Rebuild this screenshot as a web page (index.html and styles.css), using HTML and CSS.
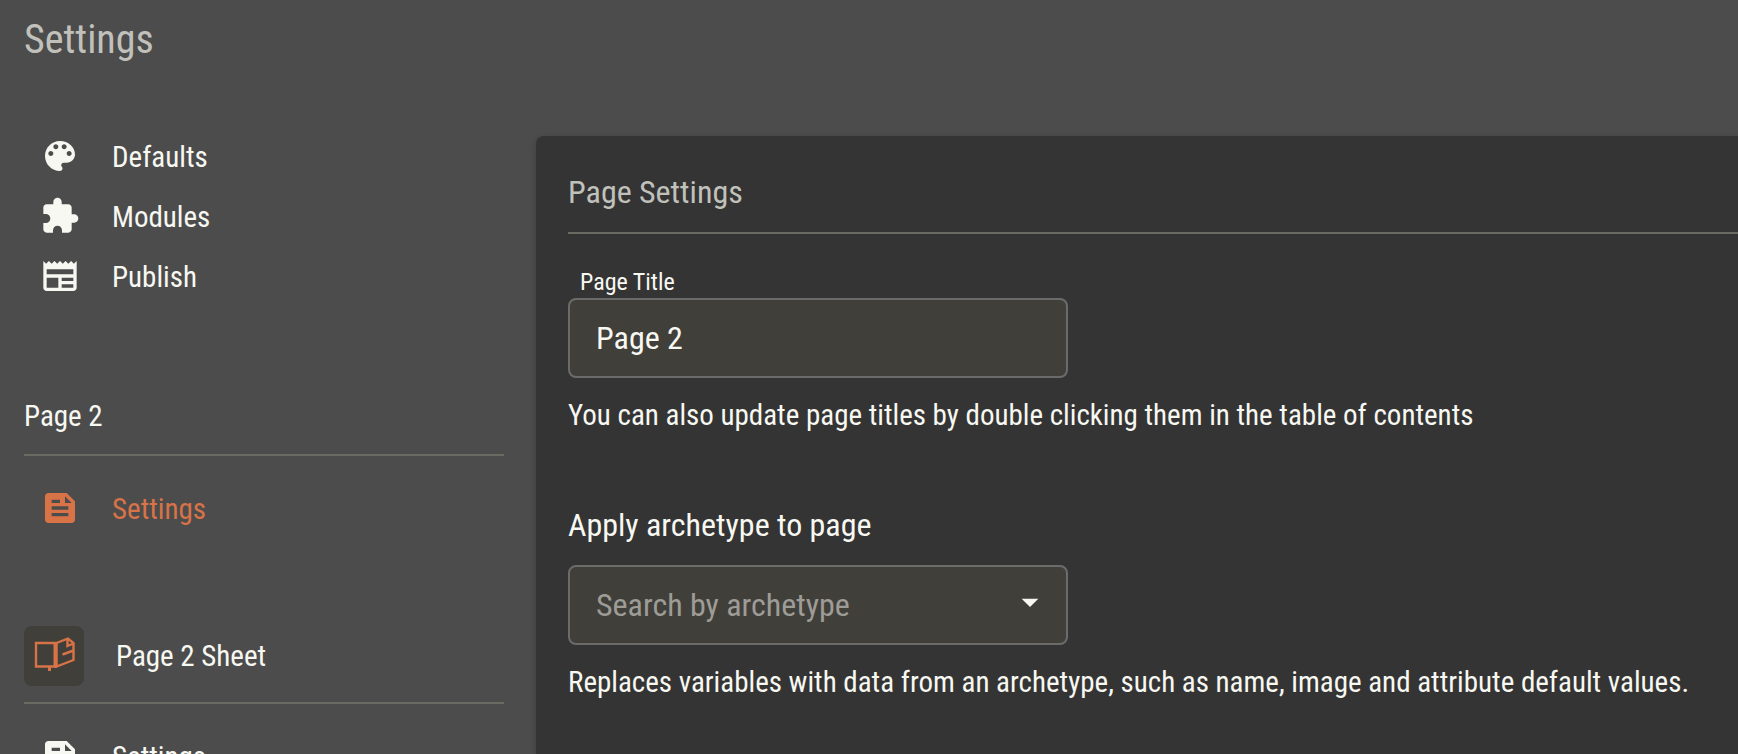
FILE: index.html
```html
<!DOCTYPE html>
<html lang="en">
<head>
<meta charset="utf-8">
<meta name="viewport" content="width=device-width, initial-scale=1">
<title>Settings</title>
<link rel="stylesheet" href="styles.css">
</head>
<body>
<svg class="sprite" aria-hidden="true">
  <symbol id="icon-article" viewBox="0 0 24 24">
    <path d="M16 3H5c-1.100 0-2 .9-2 2v14c0 1.100.9 2 2 2h14c1.100 0 2-.9 2-2V8l-5-5zM7 7h5v2H7V7zm10 10H7v-2h10v2zm0-4H7v-2h10v2zm-2-4V5l4 4h-4z"/>
  </symbol>
</svg>
<div class="app">
  <header class="app-header">
    <h1 class="app-title">Settings</h1>
  </header>
  <div class="layout">
    <nav class="sidebar" aria-label="Settings sections">
      <ul class="nav-list">
        <li><a class="nav-item" href="#defaults">
          <svg class="icon" viewBox="0 0 24 24" aria-hidden="true"><path d="M12 3c-4.970 0-9 4.030-9 9s4.030 9 9 9c.83 0 1.500-.67 1.500-1.500 0-.39-.15-.74-.39-1.010-.23-.26-.38-.61-.38-.99 0-.83.67-1.500 1.500-1.500H16c2.760 0 5-2.240 5-5 0-4.420-4.030-8-9-8zm-5.500 9c-.83 0-1.500-.67-1.500-1.500S5.670 9 6.500 9 8 9.670 8 10.500 7.330 12 6.500 12zm3-4C8.670 8 8 7.330 8 6.500S8.670 5 9.500 5s1.500.67 1.500 1.500S10.330 8 9.500 8zm5 0c-.83 0-1.500-.67-1.500-1.500S13.670 5 14.500 5s1.500.67 1.500 1.500S15.330 8 14.500 8zm3 4c-.83 0-1.500-.67-1.500-1.500S16.670 9 17.500 9s1.500.67 1.500 1.500-.67 1.500-1.500 1.500z"/></svg>
          <span class="nav-label">Defaults</span></a></li>
        <li><a class="nav-item" href="#modules">
          <svg class="icon" viewBox="0 0 24 24" aria-hidden="true"><path d="M20.500 11H19V7c0-1.100-.9-2-2-2h-4V3.500C13 2.120 11.880 1 10.500 1S8 2.120 8 3.500V5H4c-1.100 0-1.990.9-1.990 2v3.800H3.500c1.490 0 2.700 1.210 2.700 2.700s-1.210 2.700-2.700 2.700H2V20c0 1.100.9 2 2 2h3.800v-1.500c0-1.490 1.210-2.700 2.700-2.700s2.700 1.210 2.700 2.700V22H17c1.100 0 2-.9 2-2v-4h1.500c1.380 0 2.500-1.120 2.500-2.500S21.880 11 20.500 11z"/></svg>
          <span class="nav-label">Modules</span></a></li>
        <li><a class="nav-item" href="#publish">
          <svg class="icon" viewBox="0 0 24 24" aria-hidden="true"><path d="M22 3l-1.670 1.670L18.670 3 17 4.670 15.330 3l-1.660 1.670L12 3l-1.670 1.670L8.670 3 7 4.670 5.330 3 3.670 4.670 2 3v16c0 1.100.9 2 2 2h16c1.100 0 2-.9 2-2V3zM11 19H4v-6h7v6zm9 0h-7v-2h7v2zm0-4h-7v-2h7v2zm0-4H4V8h16v3z"/></svg>
          <span class="nav-label">Publish</span></a></li>
      </ul>
      <section class="nav-section">
        <h2 class="section-heading">Page 2</h2>
        <ul class="nav-list">
          <li><a class="nav-item nav-item-active" href="#page-settings" aria-current="page">
            <svg class="icon" aria-hidden="true"><use href="#icon-article"/></svg>
            <span class="nav-label">Settings</span></a></li>
        </ul>
      </section>
      <section class="nav-section">
        <h2 class="section-heading">
          <span class="tile"><svg class="tile-icon" viewBox="0 0 60 60" aria-hidden="true"><path d="M12 17h18.700v23.500H12zM32.500 17v23.500l17-6.500V17l-5.500-4.500zM43.500 12v8l6-2.500M49.500 24.500l-11 4"/><path class="tile-icon-bold" d="M31.700 16v25.500M25.500 41v4"/></svg></span>
          Page 2 Sheet</h2>
        <ul class="nav-list">
          <li><a class="nav-item" href="#sheet-settings">
            <svg class="icon" aria-hidden="true"><use href="#icon-article"/></svg>
            <span class="nav-label">Settings</span></a></li>
        </ul>
      </section>
    </nav>
    <main class="panel" id="page-settings">
      <h2 class="panel-title">Page Settings</h2>
      <form class="panel-form">
        <div class="field">
          <label class="field-label" for="page-title">Page Title</label>
          <input class="control" id="page-title" type="text" value="Page 2" aria-describedby="page-title-help">
          <p class="help" id="page-title-help">You can also update page titles by double clicking them in the table of contents</p>
        </div>
        <div class="field">
          <label class="field-heading" for="archetype">Apply archetype to page</label>
          <div class="select-wrap">
            <select class="control control-select" id="archetype" aria-describedby="archetype-help">
              <option value="">Search by archetype</option>
            </select>
            <svg class="icon select-arrow" viewBox="0 0 24 24" aria-hidden="true"><path d="M7 10l5 5 5-5z"/></svg>
          </div>
          <p class="help" id="archetype-help">Replaces variables with data from an archetype, such as name, image and attribute default values.</p>
        </div>
      </form>
    </main>
  </div>
</div>
</body>
</html>
```
FILE: styles.css
```css
:root {
  --bg: #4c4c4c;
  --panel: #343434;
  --field: #413f3a;
  --field-border: #6c6b6b;
  --rule: #6a6a63;
  --text: #f8f8f2;
  --muted: #c1c1bc;
  --accent: #d87348;
}

* {
  box-sizing: border-box;
}

body {
  margin: 0;
  background: var(--bg);
  color: var(--text);
  font-family: "Roboto Condensed", Roboto, "Liberation Sans", sans-serif;
  font-size: 29px;
  line-height: 36px;
}

h1, h2, p, ul {
  margin: 0;
  padding: 0;
  font-weight: 400;
}

.sprite {
  display: none;
}

.app {
  display: flex;
  flex-direction: column;
  height: 100vh;
  overflow: hidden;
}

.app-header {
  padding: 16px 24px 0;
}

.app-title {
  color: var(--muted);
  font-size: 40px;
  line-height: 48px;
}

.layout {
  display: grid;
  grid-template-columns: 480px 1fr;
  gap: 32px;
  flex: 1;
  min-height: 0;
  padding-left: 24px;
}

.sidebar {
  min-height: 0;
  padding-top: 62px;
  overflow-y: auto;
  scrollbar-width: none;
}

.nav-list {
  list-style: none;
}

.nav-item {
  display: flex;
  align-items: center;
  gap: 32px;
  height: 60px;
  padding-left: 16px;
  color: inherit;
  text-decoration: none;
}

.nav-item-active {
  color: var(--accent);
}

.nav-label {
  padding-top: 2px;
}

.icon {
  flex: none;
  width: 40px;
  height: 40px;
  fill: currentColor;
}

.nav-section {
  margin-top: 88px;
}

.section-heading {
  display: flex;
  align-items: center;
  gap: 32px;
  min-height: 44px;
  margin-bottom: 22px;
  padding-bottom: 16px;
  border-bottom: 2px solid var(--rule);
  box-sizing: content-box;
  font-size: 29px;
}

.tile {
  width: 60px;
  height: 60px;
  border-radius: 8px;
  background: var(--field);
}

.tile-icon {
  display: block;
  width: 60px;
  height: 60px;
  fill: none;
  stroke: var(--accent);
  stroke-width: 2.4;
}

.tile-icon-bold {
  stroke-width: 3;
}

.panel {
  margin-top: 72px;
  padding: 36px 0 0 32px;
  border-radius: 8px 0 0 0;
  background: var(--panel);
  box-shadow: 0 2px 6px rgba(0, 0, 0, 0.2);
}

.panel-title {
  padding-bottom: 20px;
  border-bottom: 2px solid var(--rule);
  color: var(--muted);
  font-size: 32px;
  line-height: 40px;
}

.panel-form {
  display: flex;
  flex-direction: column;
  gap: 69px;
  padding-top: 32px;
}

.field-label {
  display: block;
  padding-left: 12px;
  font-size: 24px;
  line-height: 32px;
}

.field-heading {
  display: block;
  margin-bottom: 20px;
  font-size: 32px;
  line-height: 40px;
}

.control {
  display: block;
  width: 100%;
  max-width: 500px;
  height: 80px;
  margin: 0;
  padding: 0 26px;
  border: 2px solid var(--field-border);
  border-radius: 8px;
  background: var(--field);
  color: var(--text);
  font-family: inherit;
  font-size: 32px;
}

.control-select {
  appearance: none;
  color: #9d9c97;
}

.select-wrap {
  position: relative;
  max-width: 500px;
}

.select-arrow {
  position: absolute;
  top: 17px;
  right: 18px;
  pointer-events: none;
}

.help {
  margin-top: 16px;
  line-height: 42px;
}
```
